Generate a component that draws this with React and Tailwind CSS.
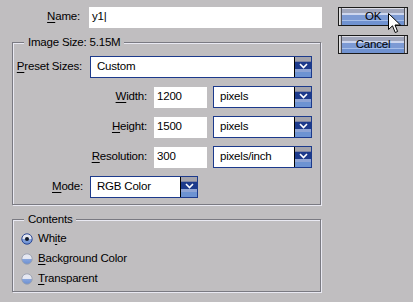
import React from "react";

const font = { fontFamily: '"Liberation Sans", Arial, sans-serif' };

const Mn = ({ children }) => <span className="underline underline-offset-2">{children}</span>;

const Arrow = () => (
  <div className="w-[17px] h-full border-l border-black flex items-center justify-center bg-[linear-gradient(to_bottom,#a4a4ac_0px,#a4a4ac_4px,#7d84a2_4px,#7d84a2_5px,#1c3a8c_5px,#1c3a8c_12px,#8fa4d4_12px,#8fa4d4_15px,#6d93d2_15px)]">
    <svg width="9" height="6" viewBox="0 0 9 6" className="-mt-[3px]">
      <path d="M1 1 L4.5 4.5 L8 1" stroke="white" strokeWidth="1.6" fill="none" />
    </svg>
  </div>
);

const Select = ({ value, className }) => (
  <div className={"flex h-[22px] border border-[#1c3a8c] bg-white " + className}>
    <div className="flex-1 pl-[6px] flex items-center text-black whitespace-nowrap">{value}</div>
    <Arrow />
  </div>
);

const Input = ({ value, className }) => (
  <div className={"h-[21px] bg-white flex items-center pl-[3px] text-black " + className}>
    {value}
  </div>
);

const Group = ({ legend, className, children }) => (
  <fieldset className={"border border-[#7a7a82] shadow-[1px_1px_0_#e9e9f2,inset_1px_1px_0_#e9e9f2] " + className}>
    <legend className="ml-[11px] px-[4px] bg-[#c0bec0] leading-[14px] text-black whitespace-nowrap">
      {legend}
    </legend>
    {children}
  </fieldset>
);

const Radio = ({ checked, label }) => (
  <div className="flex items-center h-[20px]">
    <svg width="12" height="12" viewBox="0 0 12 12" className="ml-[8px] mr-[5px]">
      <defs>
        <linearGradient id={"rg" + (checked ? "c" : "u")} x1="0" y1="0" x2="0" y2="1">
          <stop offset="0" stopColor="#e6e8f2" />
          <stop offset="0.45" stopColor="#e6e8f2" />
          <stop offset="0.5" stopColor="#8aa6dc" />
          <stop offset="1" stopColor="#6a8fd2" />
        </linearGradient>
      </defs>
      <circle cx="6" cy="6" r="5.2" fill={"url(#rg" + (checked ? "c" : "u") + ")"} stroke={checked ? "#1c3a8c" : "#9aa0b0"} strokeWidth="0.9" />
      {checked && <circle cx="6" cy="6" r="2" fill="#101828" />}
    </svg>
    <span className="text-black whitespace-nowrap">{label}</span>
  </div>
);

const Button = ({ label }) => (
  <div className="relative h-[19px] w-[70px] border border-[#1a1a1a] flex bg-[linear-gradient(to_bottom,#dcdce4_0px,#dcdce4_1px,#a0a6bc_1px,#a0a6bc_5px,#cdd6ee_5px,#cdd6ee_7px,#7c9ad4_7px,#7c9ad4_12px,#a6bee9_12px,#a6bee9_13px,#7092d0_13px)]">
    <div className="w-[3px] h-full bg-[linear-gradient(to_right,#f0f0f0,#b8b8bc)] border-r border-[#505058]" />
    <div className="flex-1 flex items-center justify-center text-black">{label}</div>
    <div className="w-[3px] h-full bg-[linear-gradient(to_right,#e8e8ec,#a8a8b0)] border-l border-[#505058]" />
  </div>
);

export default function App() {
  return (
    <div className="relative w-[413px] h-[302px] bg-[#c0bec0] overflow-hidden text-[11.5px] tracking-[-0.2px]" style={font}>
      <div className="flex pl-[12px]">
        {/* left column */}
        <div className="w-[310px]">
          <div className="flex items-center mt-[7px] h-[20px]">
            <div className="w-[77px] text-right pr-[9px] text-black whitespace-nowrap">
              <Mn>N</Mn>ame:
            </div>
            <Input value="y1|" className="w-[233px] h-[20px]" />
          </div>

          <Group legend="Image Size: 5.15M" className="mt-[8px] w-[309px] h-[170px] pt-[7px]">
            <div className="flex flex-col gap-[8px]">
              <div className="flex items-center">
                <div className="w-[77px] text-right pr-[8px] text-black whitespace-nowrap">
                  <Mn>P</Mn>reset Sizes:
                </div>
                <Select value="Custom" className="w-[222px]" />
              </div>
              {[
                ["W", "idth:", "1200", "pixels"],
                ["H", "eight:", "1500", "pixels"],
                ["R", "esolution:", "300", "pixels/inch"],
              ].map(([m, rest, v, unit]) => (
                <div key={m} className="flex items-center">
                  <div className="w-[141px] text-right pr-[7px] text-black whitespace-nowrap">
                    <Mn>{m}</Mn>
                    {rest}
                  </div>
                  <Input value={v} className="w-[53px]" />
                  <Select value={unit} className="ml-[6px] w-[99px]" />
                </div>
              ))}
              <div className="flex items-center">
                <div className="w-[77px] text-right pr-[7px] text-black whitespace-nowrap">
                  <Mn>M</Mn>ode:
                </div>
                <Select value="RGB Color" className="w-[108px]" />
              </div>
            </div>
          </Group>

          <Group legend="Contents" className="mt-[7px] w-[309px] h-[80px] pt-[3px]">
            <Radio checked label={<>Wh<Mn>i</Mn>te</>} />
            <Radio label={<><Mn>B</Mn>ackground Color</>} />
            <Radio label={<><Mn>T</Mn>ransparent</>} />
          </Group>
        </div>

        {/* right column */}
        <div className="ml-[16px] mt-[7px] flex flex-col gap-[9px]">
          <Button label="OK" />
          <Button label="Cancel" />
        </div>
      </div>

      {/* mouse cursor over OK */}
      <svg width="14" height="22" viewBox="0 0 14 22" className="absolute left-[388px] top-[13px]">
        <path d="M0.5 0.5 L0.5 16.5 L4.5 12.8 L7.2 19.5 L9.6 18.5 L7 12 L12.5 12 Z" fill="white" stroke="black" strokeWidth="1" />
      </svg>
    </div>
  );
}
